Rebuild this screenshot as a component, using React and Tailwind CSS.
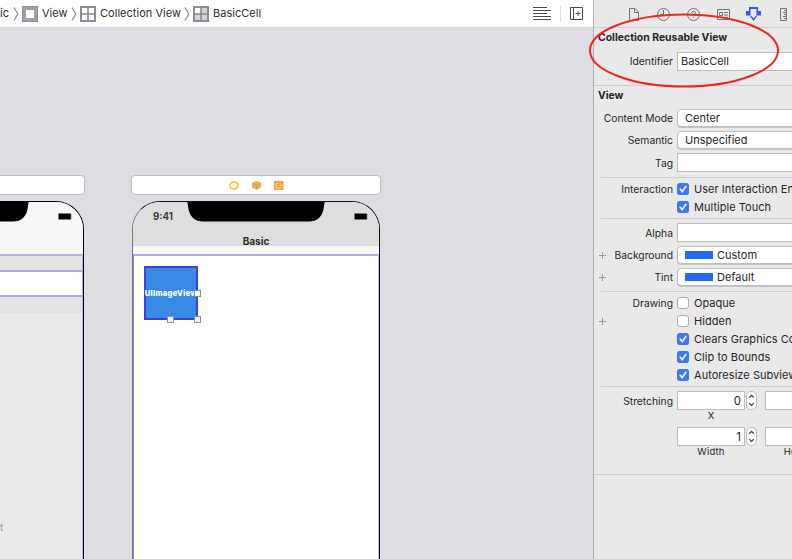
import React from "react";

const Chevron = () => (
  <svg className="mx-[1px] h-4 w-[6px] shrink-0" viewBox="0 0 6 16" fill="none" stroke="#8a8a8e" strokeWidth="1.2">
    <path d="M1 1.5 4.8 8 1 14.5" />
  </svg>
);

const CellIcon = ({ filled }) => (
  <svg className="h-4 w-4 shrink-0" viewBox="0 0 16 16">
    <rect width="16" height="16" fill="#8e8e92" />
    <rect x="2" y="2" width="5.2" height="5.2" fill="#fff" />
    <rect x="8.8" y="2" width="5.2" height="5.2" fill={filled ? "#d3d3d5" : "#fff"} />
    <rect x="2" y="8.8" width="5.2" height="5.2" fill={filled ? "#d3d3d5" : "#fff"} />
    <rect x="8.8" y="8.8" width="5.2" height="5.2" fill={filled ? "#d3d3d5" : "#fff"} />
  </svg>
);

const Toolbar = () => (
  <div className="flex h-7 shrink-0 items-center border-b border-[#d6d6d9] bg-white text-[11px] tracking-[0.03px] text-[#2c2c2e]">
    <span className="w-[9px]">ic</span>
    <span className="w-[3px]" />
    <Chevron />
    <span className="w-[2px]" />
    <svg className="h-4 w-4 shrink-0" viewBox="0 0 16 16">
      <rect width="16" height="16" fill="#8e8e92" />
      <rect x="1" y="1" width="14" height="14" fill="#a0a0a4" />
      <rect x="4" y="4" width="8" height="8" fill="#fff" />
    </svg>
    <span className="ml-1 w-[28px] whitespace-nowrap">View</span>
    <Chevron />
    <span className="w-[2px]" />
    <CellIcon />
    <span className="ml-1 w-[83px] whitespace-nowrap">Collection View</span>
    <Chevron />
    <span className="w-[2px]" />
    <CellIcon filled />
    <span className="ml-1 whitespace-nowrap">BasicCell</span>
    <div className="ml-auto flex items-center pr-[10px]">
      <svg className="h-[14px] w-[18px]" viewBox="0 0 18 14" stroke="#4a4a4c" strokeWidth="1">
        <path d="M0 .5h14M0 3.5h18M0 6.5h14M0 9.5h18M0 12.5h18" />
      </svg>
      <span className="ml-[9px] mr-[9px] h-4 w-px bg-[#dcdcde]" />
      <svg className="h-[13px] w-[13px]" viewBox="0 0 13 13" fill="none" stroke="#4a4a4c">
        <path d="M.5.5h12v12H.5zM3.5.5v12M5.5 6.5h5M8 4v5" />
      </svg>
    </div>
  </div>
);

const Battery = () => (
  <svg className="h-[7px] w-[15px]" viewBox="0 0 15 7">
    <rect x=".4" y=".4" width="12.6" height="6.2" rx="1" fill="#000" stroke="#777" strokeWidth=".8" />
    <path d="M13.8 2.2q1 1.2 0 2.4z" fill="#999" />
  </svg>
);

const Notch = () => (
  <svg className="h-[21px] w-[142px]" viewBox="0 0 142 21">
    <path d="M1 0H141Q139 1 139 5C138 15 133 20.5 124 20.5H18C9 20.5 4 15 3 5Q3 1 1 0Z" fill="#000" />
  </svg>
);

const Handle = ({ className }) => (
  <span className={`absolute h-[7px] w-[7px] border border-[#8e8e98] bg-[#efeff5] ${className}`} />
);

const LeftScene = () => (
  <div className="flex w-[85px] shrink-0 flex-col">
    <div className="h-5 rounded-r-[4px] border border-l-0 border-[#bdbdc1] bg-white" />
    <div className="mt-[6px] flex w-[84px] flex-1 flex-col overflow-hidden rounded-tr-[28px] border-r border-t border-black bg-[#eaeaea]">
      <div className="relative h-[52px] shrink-0 bg-[#f8f8f8]">
        <div className="absolute -left-[111px] -top-px"><Notch /></div>
        <div className="absolute left-[58px] top-[11px]"><Battery /></div>
      </div>
      <div className="h-[16px] shrink-0 border-r border-t-2 border-[#b6b2ee] bg-[#e3e3e3]" />
      <div className="h-[27px] shrink-0 border-y-2 border-r border-[#aaa6f3] bg-white" />
      <div className="h-4 shrink-0 border-r border-[#b9b6f4] bg-[#e3e3e3]" />
      <div className="flex-1 border-r border-[#b9b6f4] pt-[207px] text-[10px] leading-[14px] text-[#999]">t</div>
    </div>
  </div>
);

const BasicScene = () => (
  <div className="ml-[46px] flex w-[250px] shrink-0 flex-col">
    <div className="flex h-5 items-center justify-center gap-[12px] rounded-[4px] border border-[#bdbdc1] bg-white">
      <svg className="h-[10px] w-[11px]" viewBox="0 0 11 10">
        <ellipse cx="5" cy="5.5" rx="4" ry="3.4" fill="none" stroke="#fbc832" strokeWidth="1.9" />
      </svg>
      <svg className="h-[10px] w-[10px]" viewBox="0 0 10 10">
        <path d="M4.6 1 9.1 2.7v4.8L4.6 9.8.1 7.5V2.7z" fill="#f4a95a" />
        <path d="M1.2 3.6 4.6 5.3l3.4-1.7M4.6 5.3v4" fill="none" stroke="#d9934f" strokeWidth=".7" />
      </svg>
      <svg className="h-[10px] w-[10px]" viewBox="0 0 10 10">
        <rect y="1" width="9.5" height="9" fill="#f3a044" />
        <path d="M4.5 3.5H2.2v4.5h5V7M4.5 5.5h3M6 3.5 8 5.5" fill="none" stroke="#fbdcb8" strokeWidth=".8" />
      </svg>
    </div>
    <div className="mx-px mt-[6px] flex flex-1 flex-col overflow-hidden rounded-t-[28px] border-x border-t border-[#111] border-l-[#77777c] bg-white">
      <div className="flex h-11 shrink-0 flex-col bg-[#dedede]">
        <div className="relative flex h-[29px] shrink-0 justify-between pl-[20px] pr-[10px]">
          <span className="pt-[8px] text-[9.7px] font-bold leading-[14px] text-[#3a3a3a]">9:41</span>
          <div className="absolute left-[52px] -top-px"><Notch /></div>
          <div className="pt-[11px]"><Battery /></div>
        </div>
        <span className="shrink-0 pt-[3px] text-center text-[10px] font-bold leading-[14px] text-[#2c2c2c]">Basic</span>
      </div>
      <div className="h-2 shrink-0 bg-[#f7f7f7]" />
      <div className="flex-1 border-x border-t-2 border-[#b3aeec] border-l-[#8580d0] pl-[10px] pt-[10px]">
        <div className="relative flex h-[54px] w-[54px] items-center justify-center border-2 border-[#3b42dc] bg-[#398ae3]">
          <span className="whitespace-nowrap pt-[2px] text-[7.6px] font-extrabold tracking-[0.3px] text-white">UIImageView</span>
          <Handle className="-right-[5px] top-[22px]" />
          <Handle className="-bottom-[5px] left-[21px]" />
          <Handle className="-bottom-[5px] -right-[5px]" />
        </div>
      </div>
    </div>
  </div>
);

const Row = ({ label, plus, height = "h-[22px]", labelPad = "pt-px", children }) => (
  <div className={`flex shrink-0 items-center ${height}`}>
    <span className="w-[17px] shrink-0 pl-[4px]">
      {plus && (
        <svg className="h-[9px] w-[9px]" viewBox="0 0 9 9" stroke="#9b9b9d">
          <path d="M1 4.5h7M4.5 1v7" />
        </svg>
      )}
    </span>
    <span className={`mr-1 flex w-[62px] shrink-0 justify-end whitespace-nowrap text-[10.3px] ${labelPad}`}>{label}</span>
    {children}
  </div>
);

const Field = ({ children }) => (
  <div className="flex h-[19px] w-[125px] shrink-0 items-center border border-[#bcbcbc] bg-white pl-[3px]">{children}</div>
);

const Select = ({ swatch, children }) => (
  <div className="flex h-[18px] w-[125px] shrink-0 items-center rounded-[4px] border border-[#bebebe] bg-white pl-[7px] shadow-[0_1px_0_#c4c4c4]">
    {swatch && <span className="mr-1 h-2 w-[28px] bg-[#2468fb]" />}
    <span className="pt-px">{children}</span>
  </div>
);

const Check = ({ on, children }) => (
  <div className="flex shrink-0 items-center gap-[5px] whitespace-nowrap">
    {on ? (
      <svg className="h-3 w-3" viewBox="0 0 12 12">
        <rect width="12" height="12" rx="2.5" fill="#3a78f5" />
        <path d="M3.3 6.2 5.2 8.6 8.9 3.3" fill="none" stroke="#fff" strokeWidth="1.6" strokeLinecap="round" />
      </svg>
    ) : (
      <span className="h-3 w-3 rounded-[3px] border border-[#adadad] bg-white" />
    )}
    <span className="pt-px tracking-[0.04px]">{children}</span>
  </div>
);

const Stepper = () => (
  <svg className="ml-[1px] mr-[8px] h-[19px] w-[11px] shrink-0" viewBox="0 0 11 19" fill="none">
    <rect x=".5" y=".5" width="10" height="18" rx="4.5" fill="#fff" stroke="#bcbcbc" />
    <path d="M3.2 6.6 5.5 4.3 7.8 6.6M3.2 12.2 5.5 14.5 7.8 12.2" stroke="#333" strokeWidth="1.2" />
  </svg>
);

const NumberPair = ({ value }) => (
  <>
    <div className="flex h-[19px] w-[68px] shrink-0 items-center justify-end border border-[#bcbcbc] bg-white pr-[3px] pt-[2px] text-[11.5px]">{value}</div>
    <Stepper />
    <div className="h-[19px] w-[68px] shrink-0 border border-[#bcbcbc] bg-white" />
  </>
);

const Divider = ({ full }) => (
  <div className={`h-px shrink-0 bg-[#cdcdcd] ${full ? "" : "ml-[7px]"}`} />
);

const InspectorTabs = () => (
  <div className="flex h-7 shrink-0 items-center border-b border-[#cfcfcf]">
    <svg className="h-7 w-[198px] shrink-0" viewBox="594 0 198 28" fill="none" stroke="#737375" strokeWidth="1">
      <path d="M629.5 8.5h5.5l3.5 3.5v8.5h-9zM634.5 8.5v4h4" />
      <circle cx="663.5" cy="14.5" r="6" />
      <path d="M663.5 10v4.5h-3" />
      <circle cx="693.5" cy="14.5" r="6" />
      <path d="M691.6 13.2c0-2.6 3.8-2.5 3.8-.3 0 1.3-1.9 1.5-1.9 2.9M693.5 17v1.1" />
      <path d="M717.5 9.5h12v10h-12zM719.5 12.5h3v3h-3zM724 12.5h4M724 15h4M719 17.5h9" />
      <path d="M749 7h9v4h3v4.5h-3.5l-4 5.5-4-5.5h-3.5V11h3z" fill="#2f58f5" stroke="none" />
      <path d="M750.5 9h6v6.2l-3 3.3-3-3.3z" fill="#e9e9e9" stroke="none" />
      <path d="M780.5 8.5h6v12h-6zM784 10.5h2M783 12.5h3M784 14.5h2M783 16.5h3M784 18.5h2" />
    </svg>
  </div>
);

const Inspector = () => (
  <div className="flex w-[199px] shrink-0 flex-col overflow-hidden border-l border-[#b0b0b6] bg-[#e9e9e9] text-[11px] text-[#262626]">
    <InspectorTabs />
    <div className="flex h-[19px] shrink-0 items-center whitespace-nowrap pl-[4px] pt-px text-[10.45px] font-bold">Collection Reusable View</div>
    <Row label="Identifier" height="h-7"><Field><span className="pt-px">BasicCell</span></Field></Row>
    <div className="h-[10px] shrink-0" />
    <Divider full />
    <div className="mb-[2px] flex h-[19px] shrink-0 items-center pl-[4px] pt-px text-[10.3px] font-bold">View</div>
    <Row label="Content Mode"><Select>Center</Select></Row>
    <Row label="Semantic"><Select>Unspecified</Select></Row>
    <Row label="Tag" height="h-[23px]" labelPad="pt-[2px]"><Field /></Row>
    <div className="h-[3px] shrink-0" />
    <Divider />
    <div className="h-[2px] shrink-0" />
    <Row label="Interaction" height="h-[18px]"><Check on>User Interaction Enabled</Check></Row>
    <Row height="h-[18px]"><Check on>Multiple Touch</Check></Row>
    <div className="h-[2px] shrink-0" />
    <Divider />
    <div className="h-[2px] shrink-0" />
    <Row label="Alpha" height="h-[23px]" labelPad="pt-[2px]"><Field /></Row>
    <Row label="Background" plus><Select swatch>Custom</Select></Row>
    <Row label="Tint" plus><Select swatch>Default</Select></Row>
    <div className="h-[3px] shrink-0" />
    <Divider />
    <div className="h-[2px] shrink-0" />
    <Row label="Drawing" height="h-[18px]"><Check>Opaque</Check></Row>
    <Row plus height="h-[18px]"><Check>Hidden</Check></Row>
    <Row height="h-[18px]"><Check on>Clears Graphics Context</Check></Row>
    <Row height="h-[18px]"><Check on>Clip to Bounds</Check></Row>
    <Row height="h-[18px]"><Check on>Autoresize Subviews</Check></Row>
    <div className="h-[2px] shrink-0" />
    <Divider />
    <div className="h-1 shrink-0" />
    <Row label="Stretching" height="h-[19px]" labelPad="pt-[2px]"><NumberPair value="0" /></Row>
    <div className="flex h-[17px] shrink-0 pl-[83px] text-[9.5px] leading-[11px]">
      <span className="w-[68px] shrink-0 text-center">X</span>
      <span className="ml-5 w-[68px] shrink-0 text-center">Y</span>
    </div>
    <Row height="h-[19px]"><NumberPair value="1" /></Row>
    <div className="flex h-[28px] shrink-0 pl-[83px] text-[9.5px] leading-[11px] tracking-[0.2px]">
      <span className="w-[68px] shrink-0 text-center">Width</span>
      <span className="ml-5 w-[68px] shrink-0 text-center">Height</span>
    </div>
    <Divider full />
  </div>
);

export default function App() {
  return (
    <div className="relative flex h-[559px] w-[792px] overflow-hidden bg-[#dddee3] font-['Inter','Liberation_Sans',sans-serif]">
      <div className="flex w-[593px] shrink-0 flex-col">
        <Toolbar />
        <div className="flex flex-1 pt-[147px]">
          <LeftScene />
          <BasicScene />
        </div>
      </div>
      <Inspector />
      <svg className="pointer-events-none absolute left-[588px] top-[12px] h-[78px] w-[192px]" viewBox="588 12 192 78" fill="none">
        <ellipse cx="684" cy="50.5" rx="94" ry="36" stroke="#f0261b" strokeWidth="2" />
      </svg>
    </div>
  );
}
